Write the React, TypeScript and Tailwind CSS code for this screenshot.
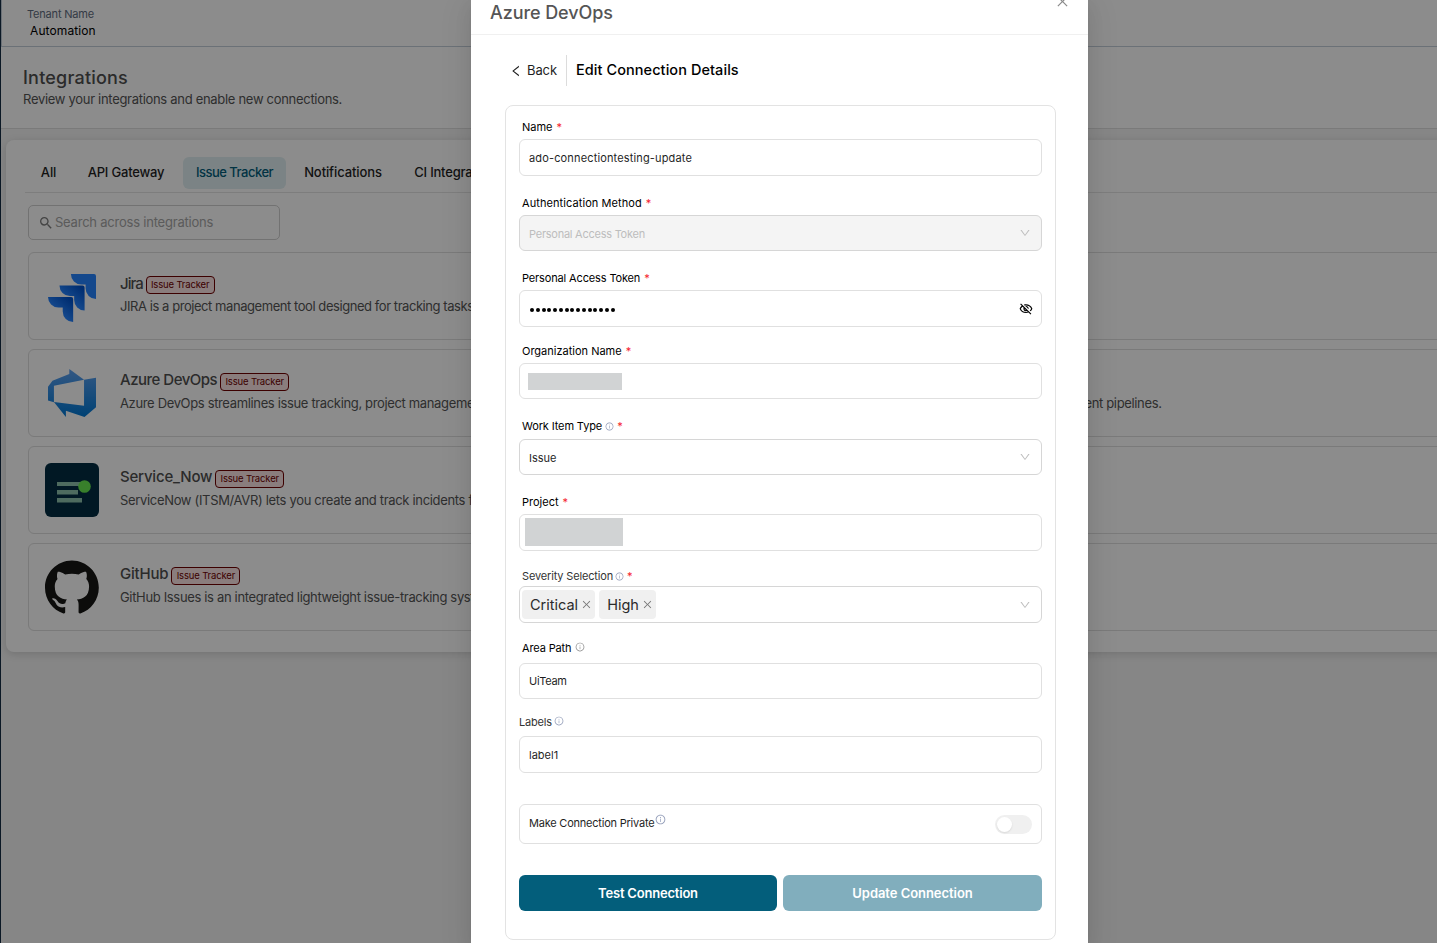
import type { ReactNode } from "react";
import {
  AiOutlineClose,
  AiOutlineDown,
  AiOutlineInfoCircle,
  AiOutlineLeft
} from "react-icons/ai";
import { MdOutlineVisibilityOff, MdSearch } from "react-icons/md";

const tabs = [
  { name: "All", style: "w-[41px] tracking-[-0.1px]" },
  { name: "API Gateway", style: "w-[103px] tracking-[-0.2px]" },
  { name: "Issue Tracker", style: "w-[103px] bg-[#e0eff2] text-[#035e7b] tracking-[-0.5px]" },
  { name: "Notifications", style: "w-[103px] tracking-[-0.1px]" },
  { name: "CI Integrations", style: "w-[116px] tracking-[-0.2px]" }
];

const integrations = [
  {
    name: "Jira",
    logo: <JiraLogo />,
    logoStyle: "pt-1",
    nameStyle: "tracking-[-1px]",
    detailStyle: "tracking-[-0.44px]",
    detail: "JIRA is a project management tool designed for tracking tasks."
  },
  {
    name: "Azure DevOps",
    logo: <AzureLogo />,
    logoStyle: "",
    nameStyle: "pb-[2px] tracking-[-0.5px]",
    detailStyle: "tracking-[-0.35px]",
    detail:
      "Azure DevOps streamlines issue tracking, project management, and cross-team collaboration, with integrated tooling for planning, source control, builds, and deployment pipelines."
  },
  {
    name: "Service_Now",
    logo: <ServiceNowLogo />,
    logoStyle: "",
    nameStyle: "pb-[2px] tracking-[-0.2px]",
    detailStyle: "tracking-[-0.33px]",
    detail: "ServiceNow (ITSM/AVR) lets you create and track incidents from it."
  },
  {
    name: "GitHub",
    logo: <GitHubLogo />,
    logoStyle: "",
    nameStyle: "pb-[2px] tracking-[-0.2px]",
    detailStyle: "tracking-[-0.34px]",
    detail: "GitHub Issues is an integrated lightweight issue-tracking system."
  }
];

export default function App() {
  return (
    <div className="relative h-[943px] w-[1437px] overflow-hidden bg-[#f4f4f4] font-[Inter,'Liberation_Sans',sans-serif] text-[#1f1f1f]">
      <IntegrationsPage />
      <div className="absolute inset-0 flex justify-center bg-black/45">
        <ConnectionModal />
      </div>
    </div>
  );
}

function IntegrationsPage() {
  return (
    <div className="h-full border-l border-[#142c44]">
      <header className="h-[47px] border-b border-l border-[#c3ced9] bg-white pt-[7px] pl-[25px]">
        <p className="text-[11px] leading-[15px] tracking-[-0.18px] text-[#5f6c80]">Tenant Name</p>
        <p className="pl-[3px] text-xs leading-[18px] tracking-[0.1px] text-black">Automation</p>
      </header>

      <section className="h-[82px] border-b border-[#dedede] bg-white pt-[19px] pl-[22px]">
        <h1 className="text-lg leading-6 font-medium tracking-[0.2px] text-[#4f4f4f]">Integrations</h1>
        <p className="mt-[-1px] text-[13px] leading-5 tracking-[-0.3px] text-[#555]">
          Review your integrations and enable new connections.
        </p>
      </section>

      <section className="mt-[11px] ml-[5px] h-[512px] w-[1500px] rounded-lg bg-white pt-[17px] pl-[19px] shadow-[0_2px_8px_rgba(0,0,0,0.15)]">
        <nav className="flex h-9 gap-[5.5px] border-b border-[#e3e3e3] pl-[3px] text-[13px] font-medium">
          {tabs.map((tab) => (
            <div
              key={tab.name}
              className={`flex h-8 items-center justify-center rounded-md ${tab.style}`}
            >
              {tab.name}
            </div>
          ))}
        </nav>

        <div className="mt-3 ml-[3px] flex h-[35px] w-[252px] items-center rounded-[5px] border border-[#cfcfcf] pl-[9px] text-[13px] tracking-[-0.22px] text-[#a6a6a6]">
          <MdSearch className="mr-px size-4 text-[#7d7d7d]" />
          Search across integrations
        </div>

        <div className="mt-3 ml-[3px] flex flex-col gap-[9px]">
          {integrations.map((item) => (
            <article
              key={item.name}
              className="flex h-[88px] items-center rounded-md border border-[#dedede] pl-4"
            >
              <div className={`flex w-[54px] justify-center ${item.logoStyle}`}>{item.logo}</div>
              <div className="ml-[21px] pb-[2px]">
                <div className="flex h-[22px] items-center">
                  <h2 className={`text-[15px] font-medium text-[#4f4f4f] ${item.nameStyle}`}>
                    {item.name}
                  </h2>
                  <span className="mt-px ml-[3px] flex h-[18px] w-[69px] items-center justify-center rounded border border-[#6e0000] bg-[#fbe3e3] pt-px text-[9.5px] tracking-[-0.15px] text-[#6e0000]">
                    Issue Tracker
                  </span>
                </div>
                <p
                  className={`text-[13px] leading-[22px] whitespace-nowrap text-[#555] ${item.detailStyle}`}
                >
                  {item.detail}
                </p>
              </div>
            </article>
          ))}
        </div>
      </section>
    </div>
  );
}

function ConnectionModal() {
  return (
    <div className="ml-[122px] h-full w-[617px] shrink-0 bg-white shadow-[0_6px_16px_rgba(0,0,0,0.08),0_3px_6px_-4px_rgba(0,0,0,0.12),0_9px_28px_8px_rgba(0,0,0,0.05)]">
      <header className="flex h-[35px] justify-between border-b border-[#f0f0f0] pr-[18px] pl-[19px]">
        <h2 className="text-lg leading-[25px] font-medium tracking-[-0.08px] text-[#555]">
          Azure DevOps
        </h2>
        <AiOutlineClose className="mt-[-6px] size-[15px] text-[#8a8a8a]" />
      </header>

      <div className="mt-[19px] ml-[38px] flex h-8 items-center">
        <AiOutlineLeft className="mt-px size-[14px]" />
        <span className="mt-px ml-1 text-[13px] tracking-[-0.1px]">Back</span>
        <div className="ml-[9px] h-[31px] border-l border-[#dcdcdc]" />
        <h3 className="ml-[9px] text-[14.5px] font-medium tracking-[0.07px] text-black">
          Edit Connection Details
        </h3>
      </div>

      <div className="mt-[19px] ml-[34px] h-[835px] w-[551px] rounded-lg border border-[#e3e3e3] px-[13px] pt-[13px] text-[11px]">
        <Field label="Name" required>
          <Box style="mt-1 h-[37px] border-[#e0e0e0] pt-[2px] pl-[9px] tracking-[0.15px]">
            ado-connectiontesting-update
          </Box>
        </Field>
        <Field
          label="Authentication Method"
          required
          style="mt-[19px]"
          labelStyle="pl-[3px] text-black tracking-[0.08px]"
        >
          <Box
            style="mt-1 h-9 border-[#d6d6d6] bg-[#f4f4f4] pl-[9px] tracking-[-0.25px] text-[#bdbdbd]"
            select
          >
            <span className="pt-[2px]">Personal Access Token</span>
          </Box>
        </Field>
        <Field
          label="Personal Access Token"
          required
          style="mt-[19px]"
          labelStyle="pl-[3px] text-black tracking-[-0.14px]"
        >
          <div className="mt-1 flex h-[37px] items-center justify-between rounded-md border border-[#e0e0e0] pr-2 pl-[10px]">
            <div className="flex gap-[1.75px] pt-[2px]">
              {Array.from({ length: 15 }, (_, index) => (
                <span key={index} className="size-1 rounded-full bg-black" />
              ))}
            </div>
            <MdOutlineVisibilityOff className="mt-px size-[14px] text-black" />
          </div>
        </Field>
        <Field label="Organization Name" required style="mt-4">
          <Box style="mt-1 h-9 border-[#e0e0e0] pl-2">
            <div className="h-[17px] w-[94px] bg-[#d1d3d4]" />
          </Box>
        </Field>
        <Field
          label="Work Item Type"
          info="ml-[3px] size-[9px] text-[#8d98b5]"
          required
          style="mt-[19px]"
          labelStyle="pl-[3px] text-black tracking-[-0.12px]"
        >
          <Box style="mt-[5px] h-9 border-[#d6d6d6] pl-[9px]" select>
            <span className="pt-[2px]">Issue</span>
          </Box>
        </Field>
        <Field label="Project" required style="mt-[19px]">
          <Box style="mt-1 h-[37px] border-[#e0e0e0] pl-[5px]">
            <div className="mb-[2px] h-7 w-[98px] bg-[#d1d3d4]" />
          </Box>
        </Field>
        <Field
          label="Severity Selection"
          info="ml-[2px] mt-px size-[9px] text-[#8d98b5]"
          required
          style="mt-[17px]"
          labelStyle="pl-[3px] text-[#333] tracking-[-0.16px]"
        >
          <Box style="mt-[2px] h-[37px] border-[#d6d6d6] pl-[2px]" select>
            <div className="flex gap-1">
              <Tag>Critical</Tag>
              <Tag>High</Tag>
            </div>
          </Box>
        </Field>
        <Field
          label="Area Path"
          info="ml-1 mb-[3px] size-[10px] text-[#8a8a8a]"
          style="mt-[17px]"
          labelStyle="pl-[3px] text-black tracking-[-0.14px]"
        >
          <Box style="mt-[7px] h-9 border-[#e0e0e0] pl-[9px] tracking-[-0.3px]">UiTeam</Box>
        </Field>
        <Field
          label="Labels"
          info="ml-[2px] mb-[3px] size-[10px] text-[#8d98b5]"
          style="mt-[15px]"
          labelStyle="text-[#333] tracking-[-0.2px]"
        >
          <Box style="mt-[6px] h-[37px] border-[#e0e0e0] pt-[2px] pl-[9px]">label1</Box>
        </Field>

        <div className="mt-[31px] flex h-10 items-center justify-between rounded-md border border-[#e0e0e0] pr-[9px] pl-[9px]">
          <span className="flex items-center pb-[2px] tracking-[-0.22px]">
            Make Connection Private
            <AiOutlineInfoCircle className="mb-[7px] ml-px size-[11px] text-[#8d98b5]" />
          </span>
          <span className="flex h-[19px] w-[37px] items-center rounded-full bg-[#f0f0f0] pl-[2px]">
            <span className="size-[15px] rounded-full bg-white shadow-[0_1px_2px_rgba(0,0,0,0.1)]" />
          </span>
        </div>

        <div className="mt-[31px] flex gap-[6px] text-[13px] font-semibold text-white">
          <button className="h-9 w-[258px] rounded-md bg-[#035e7b] pt-[2px] tracking-[-0.2px]">
            Test Connection
          </button>
          <button className="h-9 w-[259px] rounded-md bg-[#81aebd] pt-[2px] tracking-[-0.05px]">
            Update Connection
          </button>
        </div>
      </div>
    </div>
  );
}

function Field({
  label,
  required,
  info,
  style = "",
  labelStyle = "pl-[3px] text-black",
  children
}: {
  label: string;
  required?: boolean;
  info?: string;
  style?: string;
  labelStyle?: string;
  children: ReactNode;
}) {
  return (
    <div className={style}>
      <div className={`flex h-4 items-center ${labelStyle}`}>
        <span>{label}</span>
        {info && <AiOutlineInfoCircle className={info} />}
        {required && <span className={info ? "ml-[3px] text-[#f5222d]" : "ml-1 text-[#f5222d]"}>*</span>}
      </div>
      {children}
    </div>
  );
}

function Box({ style, select, children }: { style: string; select?: boolean; children: ReactNode }) {
  return (
    <div className={`flex items-center justify-between rounded-md border pr-[10px] ${style}`}>
      {children}
      {select && <AiOutlineDown className="size-3 text-[#bdbdbd]" />}
    </div>
  );
}

function Tag({ children }: { children: ReactNode }) {
  return (
    <span className="flex h-[29px] items-center gap-[3px] rounded bg-[#f0f0f0] pr-[3px] pl-2 text-[14.5px] text-[#2b2b2b]">
      {children}
      <AiOutlineClose className="size-[11px] text-[#777]" />
    </span>
  );
}

function JiraLogo() {
  return (
    <svg viewBox="0 0 24 24" className="size-12">
      <defs>
        <linearGradient id="jira-mid" x1="0.95" y1="0.05" x2="0.45" y2="0.6">
          <stop offset="0.1" stopColor="#0052cc" />
          <stop offset="1" stopColor="#2684ff" />
        </linearGradient>
      </defs>
      <path
        fill="#2684ff"
        d="M23.013 0H11.455a5.215 5.215 0 0 0 5.215 5.215h2.129v2.057A5.215 5.215 0 0 0 24 12.483V1.005A1.001 1.001 0 0 0 23.013 0Z"
      />
      <path
        fill="url(#jira-mid)"
        d="M17.294 5.757H5.736a5.215 5.215 0 0 0 5.215 5.214h2.129v2.058a5.218 5.218 0 0 0 5.215 5.214V6.758a1.001 1.001 0 0 0-1.001-1.001z"
      />
      <path
        fill="url(#jira-mid)"
        d="M11.571 11.513H0a5.218 5.218 0 0 0 5.232 5.215h2.13v2.057A5.215 5.215 0 0 0 12.575 24V12.518a1.005 1.005 0 0 0-1.005-1.005z"
      />
    </svg>
  );
}

function AzureLogo() {
  return (
    <svg viewBox="0 0 24 24" className="size-12">
      <defs>
        <linearGradient id="azure" x1="0" y1="0" x2="0" y2="1">
          <stop stopColor="#5ea0ef" />
          <stop offset="1" stopColor="#0078d4" />
        </linearGradient>
      </defs>
      <path
        fill="url(#azure)"
        d="M0 8.877L2.247 5.91l8.405-3.416V.022l7.37 5.393L2.966 8.338v8.225L0 15.707zm24-4.45v14.651l-5.753 4.9-9.303-3.057v3.056l-5.978-7.416 15.057 1.798V5.415z"
      />
    </svg>
  );
}

function ServiceNowLogo() {
  return (
    <svg viewBox="0 0 54 54" className="size-[54px]">
      <rect width="54" height="54" rx="6" fill="#032d42" />
      <path fill="#8fc3ae" d="M12 19h23v4H12zM12 27h21v4.5H12zM12 35h25v4.5H12z" />
      <circle cx="39.5" cy="23.5" r="6.3" fill="#66e84f" />
    </svg>
  );
}

function GitHubLogo() {
  return (
    <svg viewBox="0 0 98 96" className="size-[54px]">
      <path
        fill="#161614"
        fillRule="evenodd"
        d="M48.854 0C21.839 0 0 22 0 49.217c0 21.756 13.993 40.172 33.405 46.69 2.427.49 3.316-1.059 3.316-2.362 0-1.141-.08-5.052-.08-9.127-13.59 2.934-16.42-5.867-16.42-5.867-2.184-5.704-5.42-7.17-5.42-7.17-4.448-3.015.324-3.015.324-3.015 4.934.326 7.523 5.052 7.523 5.052 4.367 7.496 11.404 5.378 14.235 4.074.404-3.178 1.699-5.378 3.074-6.6-10.839-1.141-22.243-5.378-22.243-24.283 0-5.378 1.94-9.778 5.014-13.2-.485-1.222-2.184-6.275.486-13.038 0 0 4.125-1.304 13.426 5.052a46.97 46.97 0 0 1 12.214-1.63c4.125 0 8.33.571 12.213 1.63 9.302-6.356 13.427-5.052 13.427-5.052 2.67 6.763.97 11.816.485 13.038 3.155 3.422 5.015 7.822 5.015 13.2 0 18.905-11.404 23.06-22.324 24.283 1.78 1.548 3.316 4.481 3.316 9.126 0 6.6-.08 11.897-.08 13.526 0 1.304.89 2.853 3.316 2.364 19.412-6.52 33.405-24.935 33.405-46.691C97.707 22 75.788 0 48.854 0z"
      />
    </svg>
  );
}
